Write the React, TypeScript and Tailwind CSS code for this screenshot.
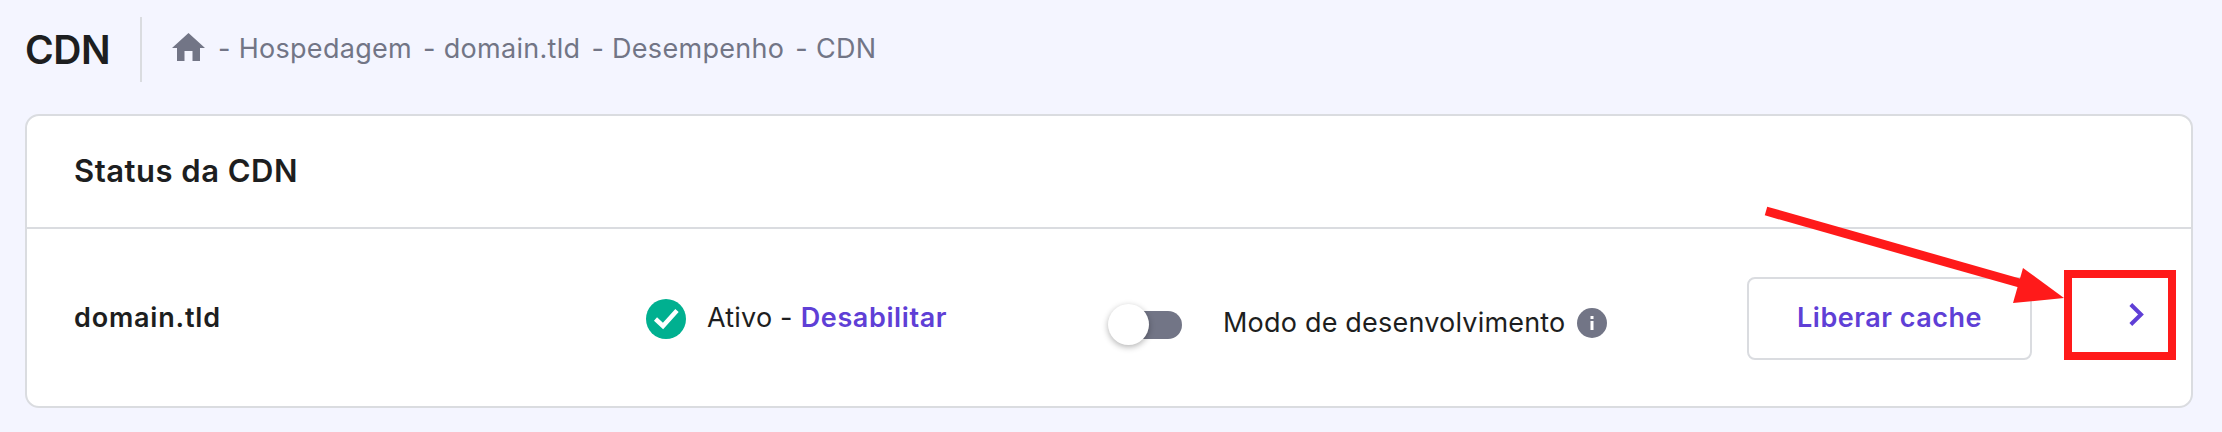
function HomeIcon() {
  return (
    <svg viewBox="0 0 33 28" className="w-[33px] h-[28px] -mt-[5px] shrink-0" fill="#727586">
      <path d="M16.5 0 33 15h-5V28h-7.500V18h-8v10H5V15H0z" />
    </svg>
  );
}

function Crumb({ label }: { label: string }) {
  return <span className="mr-[11px]">- {label}</span>;
}

export default function App() {
  return (
    <div
      className="relative w-[2222px] h-[432px] overflow-hidden bg-[#f4f5ff] text-[#1d1e20]"
      style={{ fontFamily: "Inter, 'Liberation Sans', sans-serif" }}
    >
      <div className="flex items-center h-[65px] mt-[17px] ml-[25px]">
        <h1 className="w-[115px] text-[39px] font-semibold tracking-[-0.5px] leading-none">CDN</h1>
        <div className="w-[2px] h-[65px] bg-[#dadce0]" />
        <div className="flex items-center ml-[30px] text-[27px] tracking-[0.3px] text-[#727586]">
          <HomeIcon />
          <div className="flex ml-[13px]">
            <Crumb label="Hospedagem" />
            <Crumb label="domain.tld" />
            <Crumb label="Desempenho" />
            <span>- CDN</span>
          </div>
        </div>
      </div>

      <div className="w-[2168px] h-[294px] mt-[32px] ml-[25px] bg-white border-2 border-[#dadce0] rounded-[14px]">
        <div className="flex items-center h-[113px] pl-[47px] border-b-2 border-[#dadce0]">
          <h2 className="text-[31px] font-semibold tracking-[0.5px]">Status da CDN</h2>
        </div>
        <div className="flex items-center h-[177px] pl-[47px]">
          <div className="w-[572px] text-[27px] font-semibold tracking-[0.8px] mt-[2px]">domain.tld</div>
          <div className="flex items-center w-[462px] mt-[2px]">
            <svg viewBox="0 0 40 40" className="w-[40px] h-[40px] shrink-0">
              <circle cx="20" cy="20" r="20" fill="#00b090" />
              <path d="M9.500 20 17 27 31 11.500" fill="none" stroke="#fff" strokeWidth="4.500" />
            </svg>
            <span className="ml-[21px] text-[27px] tracking-[0.2px]">Ativo -</span>
            <a className="ml-[8px] text-[27px] font-semibold tracking-[0.6px] text-[#5f3fd6]">Desabilitar</a>
          </div>
          <div className="flex items-center w-[639px] mt-[13px]">
            <div className="relative w-[74px] h-[41px] shrink-0">
              <div className="absolute left-[10px] right-0 top-[7px] h-[28px] rounded-r-[14px] bg-[#727586]" />
              <div className="absolute left-0 top-0 w-[41px] h-[41px] rounded-full bg-white shadow-[0_2px_6px_rgba(0,0,0,0.3)]" />
            </div>
            <span className="ml-[41px] -mt-[2px] text-[27px] tracking-[0.2px]">Modo de desenvolvimento</span>
            <span className="flex items-center justify-center ml-[11px] -mt-[3px] w-[30px] h-[30px] rounded-full bg-[#727586]">
              <svg viewBox="0 0 30 30" className="w-[30px] h-[30px]">
                <rect x="13.500" y="8" width="3" height="3" fill="#fff" />
                <rect x="13.500" y="13" width="3" height="9" fill="#fff" />
              </svg>
            </span>
          </div>
          <button className="w-[285px] h-[83px] mt-[1px] border-2 border-[#dadce0] rounded-[8px] bg-white text-[27px] font-semibold tracking-[0.5px] text-[#5f3fd6]">
            Liberar cache
          </button>
          <svg viewBox="0 0 15 23" className="w-[15px] h-[23px] ml-[97px] -mt-[6px]">
            <path d="M1.800 1.500 12 11.500 1.800 21.500" fill="none" stroke="#5f3fd6" strokeWidth="4" />
          </svg>
        </div>
      </div>

      {/* red annotation drawn over the screenshot */}
      <div className="absolute left-[2064px] top-[270px] w-[112px] h-[90px] border-[8px] border-[#ff1a1a]" />
      <svg className="absolute left-0 top-0 w-[2222px] h-[432px] pointer-events-none" viewBox="0 0 2222 432">
        <path d="M1766 211 2030 286" stroke="#ff1a1a" strokeWidth="9" fill="none" />
        <path d="M2023 268 2064 298 2013 303z" fill="#ff1a1a" />
      </svg>
    </div>
  );
}
